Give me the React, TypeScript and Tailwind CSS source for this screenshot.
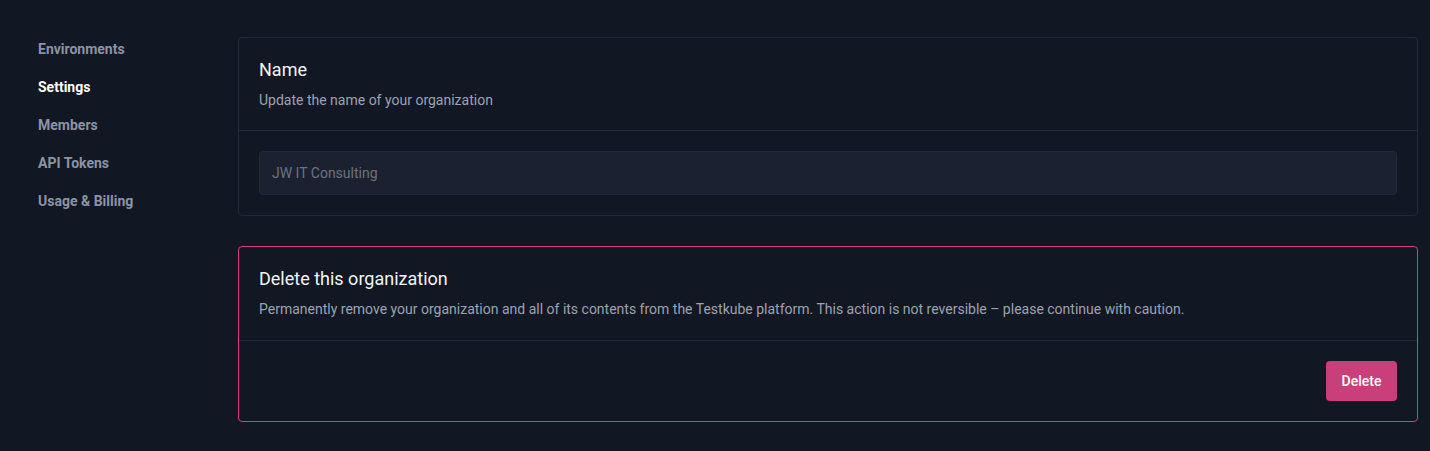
export default function App() {
  const nav = ["Environments", "Settings", "Members", "API Tokens", "Usage & Billing"]

  return (
    <div className="min-h-[451px] bg-[#121724] font-['Roboto',sans-serif] flex pl-[38px] pr-3 pt-[30px]">
      {/* Sidebar */}
      <nav className="w-[200px] shrink-0 flex flex-col">
        {nav.map((item) => (
          <div
            key={item}
            className={
              "h-[38px] flex items-center text-sm font-bold " +
              (item === "Settings" ? "text-white" : "text-[#8b93a5]")
            }
          >
            {item}
          </div>
        ))}
      </nav>

      {/* Content */}
      <main className="flex-1 pt-[7px] flex flex-col gap-[30px]">
        <section className="rounded border border-[#232a38]">
          <div className="p-5 flex flex-col gap-2 border-b border-[#252d3d]">
            <h2 className="text-[18px] leading-6 font-normal text-[#f3f4f6]">Name</h2>
            <p className="text-sm leading-5 text-[#9ca3af]">Update the name of your organization</p>
          </div>
          <div className="p-5">
            <input
              className="w-full h-[44px] rounded border border-[#222938] bg-[#1b2130] px-3 text-sm text-[#6b7280] outline-none"
              defaultValue="JW IT Consulting"
            />
          </div>
        </section>

        <section className="rounded border border-[#d1407c]">
          <div className="px-5 pt-5 pb-[21px] flex flex-col gap-2 border-b border-[#252d3d]">
            <h2 className="text-[18px] leading-6 font-normal text-[#f3f4f6]">Delete this organization</h2>
            <p className="text-sm leading-5 text-[#9ca3af]">
              Permanently remove your organization and all of its contents from the Testkube platform. This action is not reversible – please continue with caution.
            </p>
          </div>
          <div className="p-5 flex justify-end">
            <button className="h-10 w-[71px] rounded bg-[#c93f7a] text-sm font-medium text-white">
              Delete
            </button>
          </div>
        </section>
      </main>
    </div>
  )
}
